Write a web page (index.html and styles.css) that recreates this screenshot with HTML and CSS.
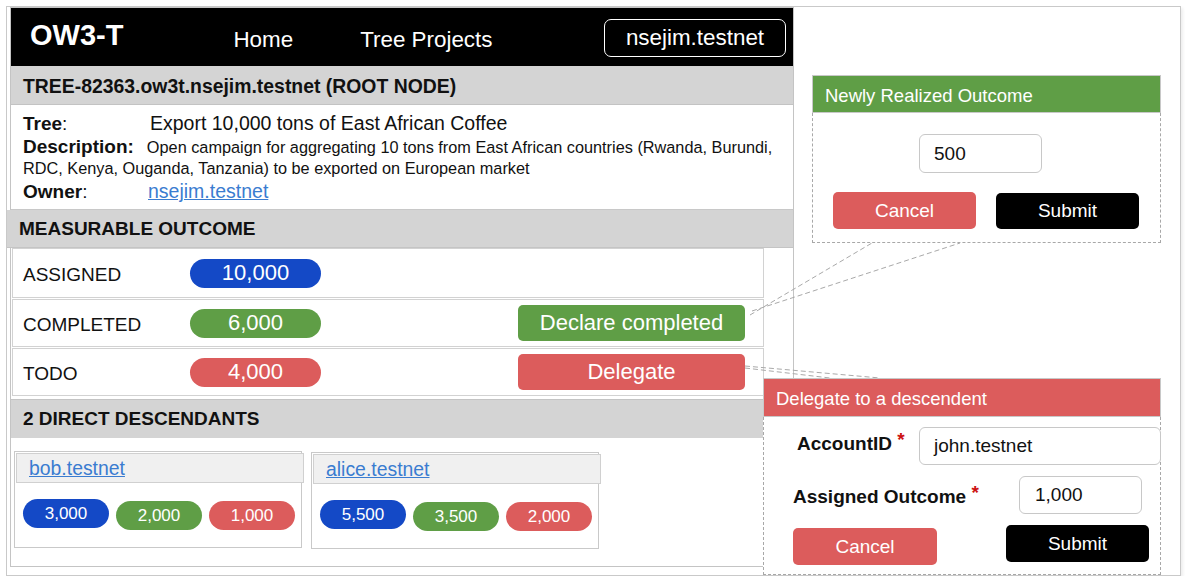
FILE: index.html
```html
<!DOCTYPE html>
<html lang="en">
<head>
<meta charset="utf-8">
<title>OW3-T Tree</title>
<link rel="stylesheet" href="styles.css">
</head>
<body>
<div class="frame">
  <div class="panel">
    <header class="topbar">
      <div class="logo">OW3-T</div>
      <nav class="nav"><span>Home</span><span>Tree Projects</span></nav>
      <div class="account">nsejim.testnet</div>
    </header>
    <div class="title-bar">TREE-82363.ow3t.nsejim.testnet (ROOT NODE)</div>
    <div class="info">
      <div class="line"><span class="lbl"><b>Tree</b>:</span><span class="val">Export 10,000 tons of East African Coffee</span></div>
      <p class="desc"><b>Description:</b><span class="desc-text">Open campaign for aggregating 10 tons from East African countries (Rwanda, Burundi,</span><br><span class="desc-more">RDC, Kenya, Ouganda, Tanzania) to be exported on European market</span></p>
      <div class="line owner"><span class="lbl"><b>Owner</b>:</span><a class="link" href="#">nsejim.testnet</a></div>
    </div>
    <div class="measure-bar">MEASURABLE OUTCOME</div>
    <div class="rows">
      <div class="row r1"><span class="row-label">ASSIGNED</span><span class="pill blue">10,000</span></div>
      <div class="row r2"><span class="row-label">COMPLETED</span><span class="pill green">6,000</span><span class="action green">Declare completed</span></div>
      <div class="row r3"><span class="row-label">TODO</span><span class="pill red">4,000</span><span class="action red">Delegate</span></div>
    </div>
    <div class="desc-bar">2 DIRECT DESCENDANTS</div>
    <div class="cards">
      <div class="card">
        <div class="card-head"><a class="link" href="#">bob.testnet</a></div>
        <div class="chips"><span class="chip blue">3,000</span><span class="chip green">2,000</span><span class="chip red">1,000</span></div>
      </div>
      <div class="card alice">
        <div class="card-head"><a class="link" href="#">alice.testnet</a></div>
        <div class="chips"><span class="chip blue">5,500</span><span class="chip green">3,500</span><span class="chip red">2,000</span></div>
      </div>
    </div>
  </div>

  <svg class="connectors" width="1173" height="568" viewBox="0 0 1173 568">
    <line x1="743" y1="308" x2="865" y2="236"/>
    <line x1="745" y1="304" x2="953" y2="236"/>
    <line x1="738" y1="359" x2="873" y2="371"/>
    <line x1="738" y1="361" x2="823" y2="371"/>
  </svg>

  <div class="popup newly">
    <div class="pop-head green-head">Newly Realized Outcome</div>
    <div class="pop-body">
      <div class="field f-500">500</div>
      <div class="pop-actions">
        <span class="pbtn cancel">Cancel</span>
        <span class="pbtn submit">Submit</span>
      </div>
    </div>
  </div>

  <div class="popup delegate">
    <div class="pop-head red-head">Delegate to a descendent</div>
    <div class="pop-body">
      <div class="form-row fr1">
        <span class="flabel">AccountID <span class="req">*</span></span>
        <div class="field f-account">john.testnet</div>
      </div>
      <div class="form-row fr2">
        <span class="flabel">Assigned Outcome <span class="req">*</span></span>
        <div class="field f-amount">1,000</div>
      </div>
      <div class="form-row fr3">
        <span class="pbtn cancel">Cancel</span>
        <span class="pbtn submit">Submit</span>
      </div>
    </div>
  </div>
</div>
</body>
</html>
```
FILE: styles.css
```css
* { box-sizing: border-box; }

body {
  margin: 0;
  background: #fff;
  font-family: "Liberation Sans", Arial, Helvetica, sans-serif;
  color: #111;
}

.frame {
  position: relative;
  margin: 6px 0 0 6px;
  width: 1175px;
  height: 570px;
  border: 1px solid #c9c9c9;
  box-shadow: 2px 2px 3px rgba(0, 0, 0, 0.07);
}

.panel {
  margin-left: 3px;
  width: 784px;
  height: 560px;
  border: 1px solid #c4c4c4;
}

/* top bar */
.topbar {
  display: flex;
  align-items: flex-start;
  height: 58px;
  background: #000;
  color: #fff;
  padding: 0 7px 0 19px;
}
.logo {
  font-size: 29px;
  font-weight: bold;
  line-height: 33px;
  margin-top: 11px;
}
.nav {
  display: flex;
  gap: 67px;
  margin-left: 110px;
  margin-top: 19px;
  font-size: 22.4px;
  line-height: 26px;
}
.account {
  margin-left: auto;
  margin-top: 11px;
  width: 182px;
  height: 38px;
  border: 1px solid #fff;
  border-radius: 7px;
  display: flex;
  align-items: center;
  justify-content: center;
  font-size: 22.4px;
}

/* title */
.title-bar {
  height: 39px;
  background: #d4d4d4;
  border-bottom: 1px solid #c3c3c3;
  padding: 3px 0 0 12px;
  line-height: 35px;
  font-size: 19.4px;
  font-weight: bold;
  color: #111;
}

/* info */
.info {
  height: 105px;
  border-bottom: 1px solid #c8c8c8;
  padding: 7px 10px 0 12px;
}
.line {
  line-height: 22px;
  font-size: 19px;
}
.lbl {
  display: inline-block;
  width: 127px;
  font-size: 19px;
}
.val { font-size: 19.5px; }
.owner { margin-top: 1px; }
.owner .lbl { width: 125px; }
.owner .link { font-size: 19.5px; }
.desc {
  margin: 2px 0 0;
  font-size: 16.3px;
  line-height: 21px;
}
.desc b { font-size: 19px; line-height: 19px; }
.desc-text { margin-left: 13px; }
.link {
  color: #3a7cd0;
  text-decoration: underline;
}

/* measurable outcome */
.measure-bar {
  margin-left: -4px;
  height: 38px;
  background: #d4d4d4;
  border-bottom: 1px solid #c4c4c4;
  padding: 1px 0 0 12px;
  line-height: 36px;
  font-size: 19px;
  font-weight: bold;
  color: #111;
}
.rows {
  margin-left: 1px;
  width: 752px;
}
.row {
  display: flex;
  align-items: center;
  border: 1px solid #d2d2d2;
  padding: 0 18px 0 10px;
}
.r1 { height: 50px; }
.r2, .r3 { height: 48px; margin-top: 1px; }
.row-label {
  width: 167px;
  font-size: 19px;
  padding-top: 3px;
  color: #111;
}
.pill {
  width: 131px;
  height: 29px;
  border-radius: 15px;
  display: flex;
  align-items: center;
  justify-content: center;
  font-size: 22px;
  color: #fff;
}
.action {
  margin-left: auto;
  width: 227px;
  height: 36px;
  border-radius: 5px;
  display: flex;
  align-items: center;
  justify-content: center;
  font-size: 22px;
  color: #fff;
}
.blue { background: #1449c6; }
.green { background: #5f9e46; }
.red { background: #dc5c5c; }

/* descendants */
.desc-bar {
  margin-top: 3px;
  height: 39px;
  background: #d4d4d4;
  border-top: 1px solid #c4c4c4;
  padding-left: 12px;
  line-height: 38px;
  font-size: 19px;
  font-weight: bold;
  color: #111;
}
.cards {
  display: flex;
  align-items: flex-start;
  gap: 9px;
  margin: 13px 0 0 3px;
}
.card {
  width: 288px;
  height: 97px;
  border: 1px solid #c9c9c9;
}
.card.alice { margin-top: 1px; }
.card-head {
  margin: 1px -3px 0 1px;
  height: 30px;
  background: #f0f0f0;
  border: 1px solid #d0d0d0;
  padding: 1px 0 0 12px;
  line-height: 27px;
  font-size: 19.4px;
}
.chips {
  display: flex;
  align-items: flex-start;
  gap: 7px;
  margin: 16px 0 0 8px;
}
.chip {
  width: 86px;
  height: 29px;
  border-radius: 15px;
  display: flex;
  align-items: center;
  justify-content: center;
  font-size: 17px;
  color: #fff;
}
.chip + .chip { margin-top: 2px; }

/* connectors */
.connectors {
  position: absolute;
  left: 0;
  top: 0;
  pointer-events: none;
}
.connectors line {
  stroke: #a9a9a9;
  stroke-width: 1;
  stroke-dasharray: 5 3;
}

/* popups */
.popup {
  position: absolute;
  display: flex;
  flex-direction: column;
}
.newly { left: 805px; top: 68px; width: 349px; height: 168px; }
.delegate { left: 756px; top: 371px; width: 398px; height: 197px; }

.pop-head {
  border: 1px solid #c8c8c8;
  color: #fff;
  font-size: 18.5px;
  padding: 3px 0 0 12px;
  line-height: 33px;
}
.newly .pop-head { height: 38px; }
.delegate .pop-head { height: 39px; line-height: 34px; }
.green-head { background: #5f9e46; }
.red-head { background: #dc5c5c; }

.pop-body {
  flex: 1;
  background: #fff;
  border: 1px dashed #a8a8a8;
  border-top: none;
}

.field {
  height: 38px;
  border: 1px solid #c8c8c8;
  border-radius: 6px;
  background: #fff;
  display: flex;
  align-items: center;
  font-size: 19px;
  color: #111;
}
.f-500 {
  margin: 21px 0 0 106px;
  width: 123px;
  height: 39px;
  padding-left: 14px;
}
.pop-actions {
  display: flex;
  align-items: flex-start;
  margin-top: 19px;
}
.pbtn {
  width: 143px;
  height: 37px;
  border-radius: 5px;
  display: flex;
  align-items: center;
  justify-content: center;
  font-size: 19px;
  color: #fff;
}
.cancel { background: #dc5c5c; }
.submit { background: #000; }
.newly .cancel { margin-left: 20px; }
.newly .submit { margin-left: 20px; margin-top: 1px; height: 36px; }

.delegate .pop-body { padding-left: 29px; }
.form-row {
  display: flex;
  align-items: flex-start;
}
.fr1 { margin-top: 10px; }
.fr2 { margin-top: 11px; }
.fr3 { margin-top: 11px; }
.flabel {
  font-size: 19px;
  font-weight: bold;
  line-height: 22px;
  color: #111;
}
.fr1 .flabel { margin: 2px 0 0 4px; }
.fr2 .flabel { margin-top: 6px; }
.req {
  color: #cc1111;
  vertical-align: 4px;
}
.f-account {
  margin-left: auto;
  margin-right: -1px;
  width: 242px;
  padding-left: 14px;
}
.f-amount {
  margin-left: auto;
  margin-right: 18px;
  width: 123px;
  padding-left: 15px;
}
.fr3 .cancel { margin-top: 3px; width: 144px; }
.fr3 .submit { margin-left: auto; margin-right: 11px; }
```
